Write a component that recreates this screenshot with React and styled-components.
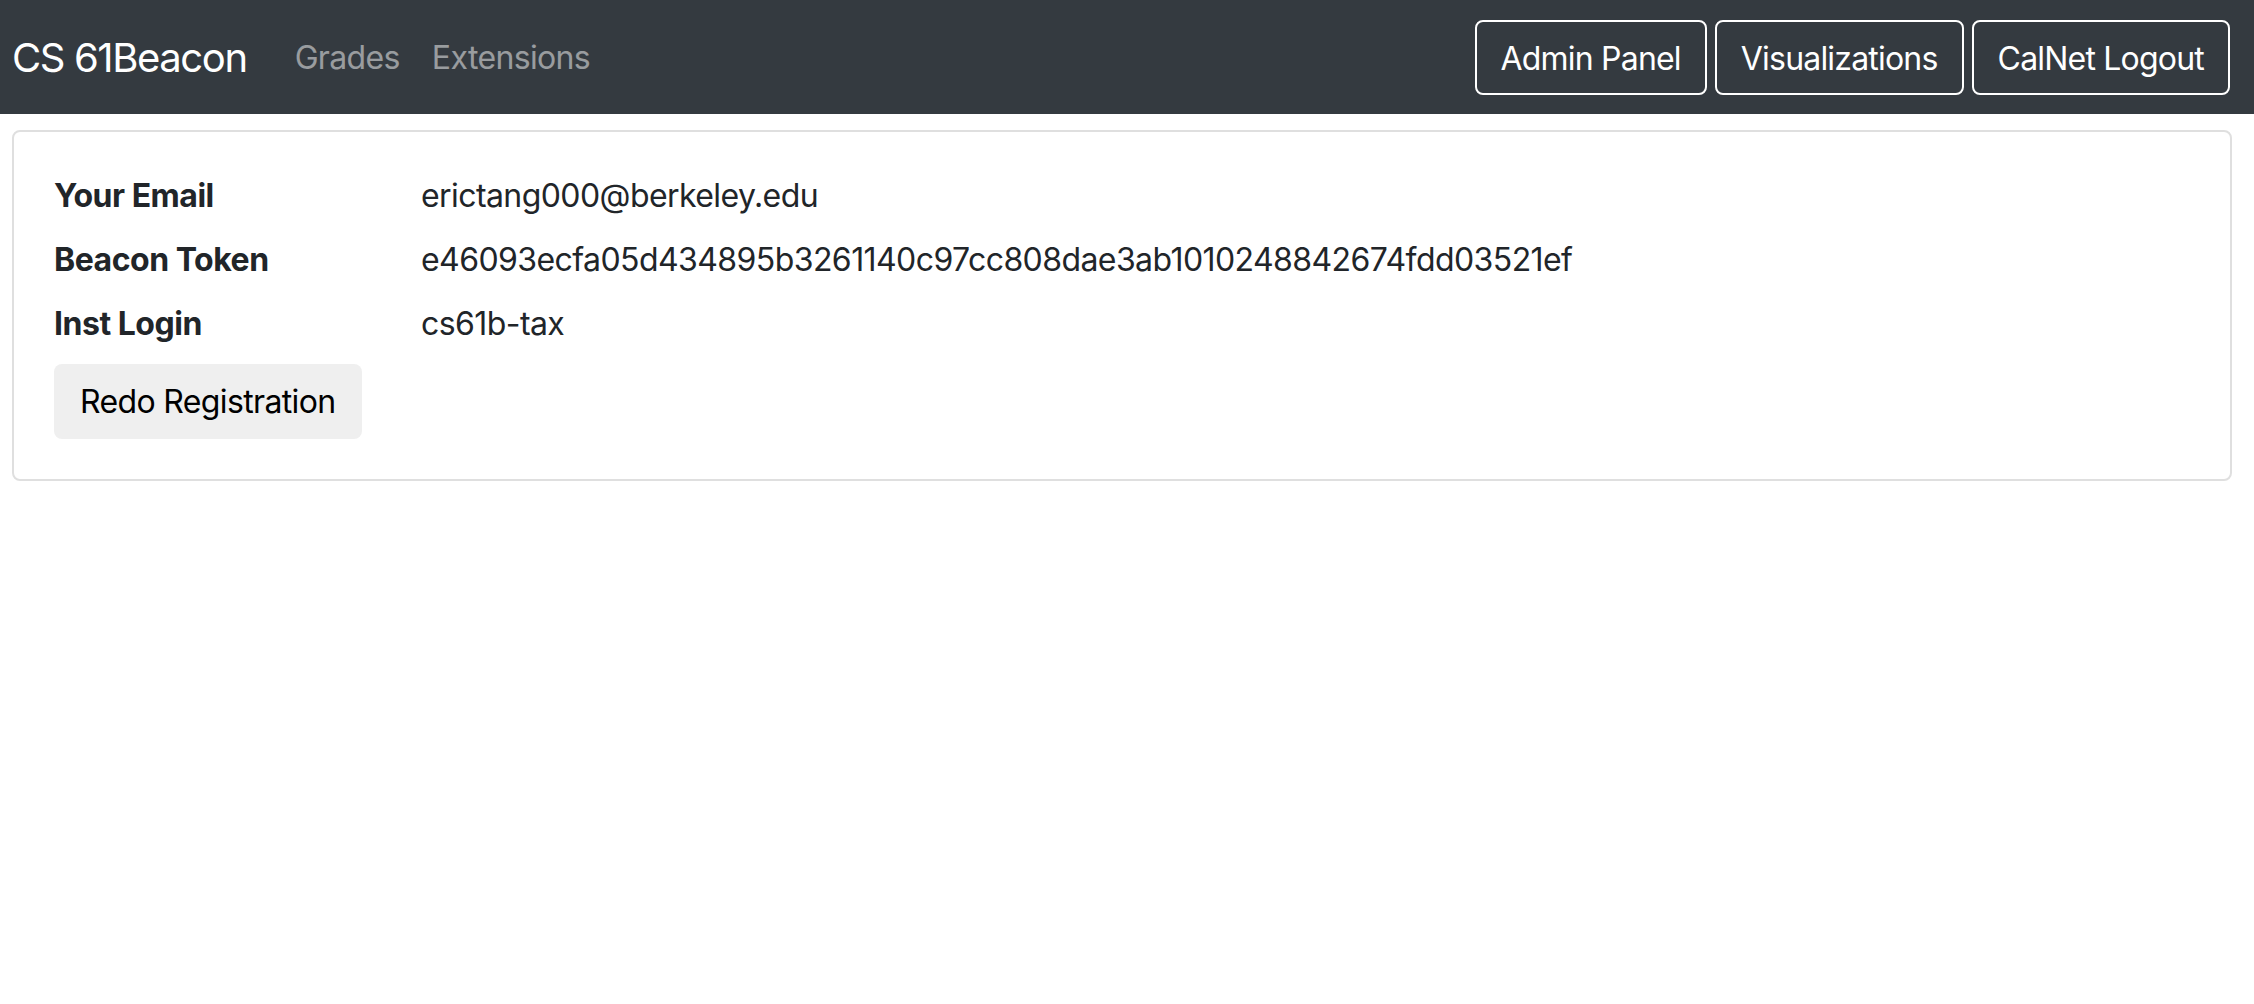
import React from 'react'
import styled, { createGlobalStyle } from 'styled-components'

const GlobalStyle = createGlobalStyle`
    html, body {
        margin: 0;
        padding: 0;
        background: #fff;
    }
    body {
        font-family: Inter, "Noto Sans", "Liberation Sans", sans-serif;
        color: #212529;
        font-size: 32px;
        line-height: 1.5;
        letter-spacing: -0.02em;
    }
`

const profile = [
    { label: 'Your Email', value: 'erictang000@berkeley.edu' },
    { label: 'Beacon Token', value: 'e46093ecfa05d434895b3261140c97cc808dae3ab1010248842674fdd03521ef' },
    { label: 'Inst Login', value: 'cs61b-tax' },
]

function App() {
    return (
        <>
            <GlobalStyle />
            <StNavbar>
                <StLeft>
                    <StBrand href="#">CS 61Beacon</StBrand>
                    <StNavLink href="#">Grades</StNavLink>
                    <StNavLink href="#">Extensions</StNavLink>
                </StLeft>
                <StRight>
                    <StOutlineButton>Admin Panel</StOutlineButton>
                    <StOutlineButton>Visualizations</StOutlineButton>
                    <StOutlineButton>CalNet Logout</StOutlineButton>
                </StRight>
            </StNavbar>

            <StCard>
                {profile.map((row) => (
                    <StRow key={row.label}>
                        <StLabel>{row.label}</StLabel>
                        <StValue>{row.value}</StValue>
                    </StRow>
                ))}
                <StLightButton>Redo Registration</StLightButton>
            </StCard>
        </>
    )
}

export default App

const StNavbar = styled.nav`
    display: flex;
    align-items: center;
    justify-content: space-between;
    height: 114px;
    padding: 2px 24px 0 12px;
    background-color: #343a40;
    box-sizing: border-box;
`
const StLeft = styled.div`
    display: flex;
    align-items: center;
`
const StBrand = styled.a`
    font-size: 40px;
    line-height: 1.5;
    letter-spacing: -0.035em;
    color: #fff;
    text-decoration: none;
    margin-right: 32px;
`
const StNavLink = styled.a`
    font-size: 32px;
    color: rgba(255, 255, 255, 0.5);
    text-decoration: none;
    padding: 0 16px;
`
const StRight = styled.div`
    display: flex;
    align-items: center;
    gap: 8px;
    margin-top: -2px;
`
const StOutlineButton = styled.button`
    font-family: inherit;
    font-size: 32px;
    line-height: 1.5;
    letter-spacing: -0.025em;
    color: #fff;
    background: transparent;
    border: 2px solid #fff;
    border-radius: 8px;
    padding: 13px 24px 10px;
    cursor: pointer;
`
const StCard = styled.div`
    margin: 16px 22px 0 12px;
    padding: 40px;
    border: 2px solid #dfdfdf;
    border-radius: 8px;
`
const StRow = styled.div`
    display: grid;
    grid-template-columns: 367px 1fr;
    margin-bottom: 16px;
`
const StLabel = styled.div`
    font-weight: 700;
    letter-spacing: -0.015em;
`
const StValue = styled.div`
    font-weight: 400;
    letter-spacing: -0.018em;
`
const StLightButton = styled.button`
    font-family: inherit;
    font-size: 32px;
    line-height: 1.5;
    letter-spacing: -0.02em;
    color: #000;
    background: #efefef;
    border: none;
    border-radius: 8px;
    padding: 14px 26px 13px;
    cursor: pointer;
`
